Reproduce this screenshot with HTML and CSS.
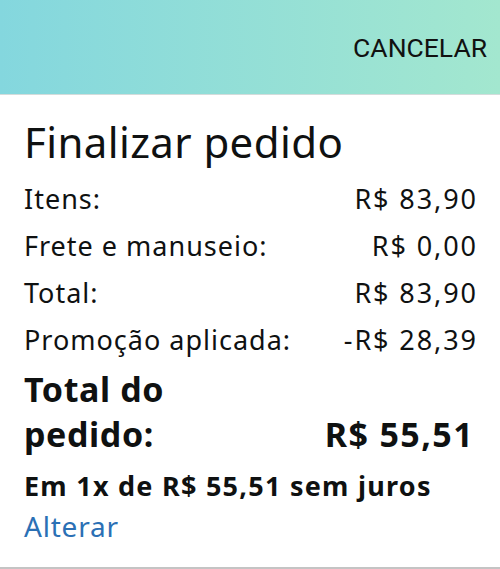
FILE: index.html
```html
<!DOCTYPE html>
<html>
<head>
	<title>Finalizar pedido</title>
	<meta charset="utf-8">
	<link rel="stylesheet" href="styles.css">
</head>
<body>

	<div id="topo">
		<span class="cancelar">CANCELAR</span>
	</div>

	<div id="resumo">
		<h1>Finalizar pedido</h1>

		<div class="linha"><span>Itens:</span><span class="valor">R$ 83,90</span></div>
		<div class="linha"><span>Frete e manuseio:</span><span class="valor">R$ 0,00</span></div>
		<div class="linha"><span>Total:</span><span class="valor">R$ 83,90</span></div>
		<div class="linha"><span>Promoção aplicada:</span><span class="valor">-R$ 28,39</span></div>

		<div class="linha total">
			<span class="rotulo">Total do pedido:</span>
			<span class="valor">R$ 55,51</span>
		</div>

		<div class="parcelas">Em 1x de R$ 55,51 sem juros</div>
		<a class="alterar" href="#">Alterar</a>
	</div>

</body>
</html>
```

FILE: styles.css
```css
body{
	margin: 0;
	font-family: "Noto Sans", sans-serif;
	color: #0f1111;
	background: #fff;
}

#topo{
	height: 94px;
	background-image: linear-gradient(to right, #84d7de, #a3e7cf);
	border-bottom: 1px solid #d3dcdb;
	display: flex;
	align-items: center;
	justify-content: flex-end;
	padding-right: 13px;
}

.cancelar{
	font-family: Roboto, sans-serif;
	font-size: 26.5px;
	color: #111;
}

#resumo{
	box-sizing: border-box;
	height: 474px;
	padding: 19px 24px 0;
	border-bottom: 2px solid #c4c4c4;
}

h1{
	margin: 0 0 5px;
	font-weight: normal;
	font-size: 42px;
	line-height: 56px;
	letter-spacing: 0.4px;
}

.linha{
	display: flex;
	justify-content: space-between;
	font-size: 27px;
	line-height: 47px;
	letter-spacing: 1px;
}

.linha .valor{
	letter-spacing: 1.9px;
	margin-right: -1.9px;
}

.total{
	margin-top: 4px;
	font-weight: bold;
	font-size: 34px;
	line-height: 45px;
	letter-spacing: 0.6px;
	align-items: flex-end;
}

.total .rotulo{
	width: 160px;
}

.total .valor{
	letter-spacing: 1.4px;
	margin-right: 2px;
}

.parcelas{
	margin-top: 9px;
	font-weight: bold;
	font-size: 27px;
	line-height: 40px;
	letter-spacing: 1.25px;
}

.alterar{
	display: block;
	margin-top: 0;
	font-size: 28px;
	line-height: 40px;
	letter-spacing: 0.8px;
	color: #2b70b5;
	text-decoration: none;
}
```
